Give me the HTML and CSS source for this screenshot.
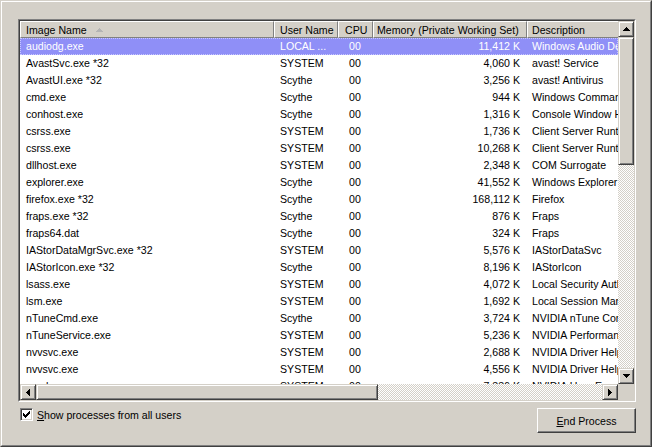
FILE: index.html
```html
<!DOCTYPE html>
<html>
<head>
<meta charset="utf-8">
<title>Processes</title>
<link rel="stylesheet" href="styles.css">
</head>
<body>
<div class="window">
  <div class="frame">
    <div class="listview">
      <div class="lv-inner">
        <div class="lv-main">
          <div class="lv-header">
            <div class="hcell c1">Image Name<svg class="sort" width="7" height="4" viewBox="0 0 7 4" shape-rendering="crispEdges"><path d="M3 0h1v1h-1z M2 1h3v1h-3z M1 2h5v1h-5z M0 3h7v1h-7z"/></svg></div>
            <div class="hcell c2">User Name</div>
            <div class="hcell c3">CPU</div>
            <div class="hcell c4">Memory (Private Working Set)</div>
            <div class="hcell c5">Description</div>
          </div>
          <div class="lv-rows">
            <div class="row selected"><span class="c1">audiodg.exe</span><span class="c2">LOCAL ...</span><span class="c3">00</span><span class="c4">11,412 K</span><span class="c5">Windows Audio Device Graph Isolation</span></div>
            <div class="row"><span class="c1">AvastSvc.exe *32</span><span class="c2">SYSTEM</span><span class="c3">00</span><span class="c4">4,060 K</span><span class="c5">avast! Service</span></div>
            <div class="row"><span class="c1">AvastUI.exe *32</span><span class="c2">Scythe</span><span class="c3">00</span><span class="c4">3,256 K</span><span class="c5">avast! Antivirus</span></div>
            <div class="row"><span class="c1">cmd.exe</span><span class="c2">Scythe</span><span class="c3">00</span><span class="c4">944 K</span><span class="c5">Windows Command Processor</span></div>
            <div class="row"><span class="c1">conhost.exe</span><span class="c2">Scythe</span><span class="c3">00</span><span class="c4">1,316 K</span><span class="c5">Console Window Host</span></div>
            <div class="row"><span class="c1">csrss.exe</span><span class="c2">SYSTEM</span><span class="c3">00</span><span class="c4">1,736 K</span><span class="c5">Client Server Runtime Process</span></div>
            <div class="row"><span class="c1">csrss.exe</span><span class="c2">SYSTEM</span><span class="c3">00</span><span class="c4">10,268 K</span><span class="c5">Client Server Runtime Process</span></div>
            <div class="row"><span class="c1">dllhost.exe</span><span class="c2">SYSTEM</span><span class="c3">00</span><span class="c4">2,348 K</span><span class="c5">COM Surrogate</span></div>
            <div class="row"><span class="c1">explorer.exe</span><span class="c2">Scythe</span><span class="c3">00</span><span class="c4">41,552 K</span><span class="c5">Windows Explorer</span></div>
            <div class="row"><span class="c1">firefox.exe *32</span><span class="c2">Scythe</span><span class="c3">00</span><span class="c4">168,112 K</span><span class="c5">Firefox</span></div>
            <div class="row"><span class="c1">fraps.exe *32</span><span class="c2">Scythe</span><span class="c3">00</span><span class="c4">876 K</span><span class="c5">Fraps</span></div>
            <div class="row"><span class="c1">fraps64.dat</span><span class="c2">Scythe</span><span class="c3">00</span><span class="c4">324 K</span><span class="c5">Fraps</span></div>
            <div class="row"><span class="c1">IAStorDataMgrSvc.exe *32</span><span class="c2">SYSTEM</span><span class="c3">00</span><span class="c4">5,576 K</span><span class="c5">IAStorDataSvc</span></div>
            <div class="row"><span class="c1">IAStorIcon.exe *32</span><span class="c2">Scythe</span><span class="c3">00</span><span class="c4">8,196 K</span><span class="c5">IAStorIcon</span></div>
            <div class="row"><span class="c1">lsass.exe</span><span class="c2">SYSTEM</span><span class="c3">00</span><span class="c4">4,072 K</span><span class="c5">Local Security Authority Process</span></div>
            <div class="row"><span class="c1">lsm.exe</span><span class="c2">SYSTEM</span><span class="c3">00</span><span class="c4">1,692 K</span><span class="c5">Local Session Manager Service</span></div>
            <div class="row"><span class="c1">nTuneCmd.exe</span><span class="c2">Scythe</span><span class="c3">00</span><span class="c4">3,724 K</span><span class="c5">NVIDIA nTune Command Server</span></div>
            <div class="row"><span class="c1">nTuneService.exe</span><span class="c2">SYSTEM</span><span class="c3">00</span><span class="c4">5,236 K</span><span class="c5">NVIDIA Performance Service</span></div>
            <div class="row"><span class="c1">nvvsvc.exe</span><span class="c2">SYSTEM</span><span class="c3">00</span><span class="c4">2,688 K</span><span class="c5">NVIDIA Driver Helper Service</span></div>
            <div class="row"><span class="c1">nvvsvc.exe</span><span class="c2">SYSTEM</span><span class="c3">00</span><span class="c4">4,556 K</span><span class="c5">NVIDIA Driver Helper Service</span></div>
            <div class="row"><span class="c1">nvxdsync.exe</span><span class="c2">SYSTEM</span><span class="c3">00</span><span class="c4">7,336 K</span><span class="c5">NVIDIA User Experience Driver</span></div>
          </div>
        </div>
        <div class="vscroll">
          <div class="sbtn"><svg width="7" height="4" viewBox="0 0 7 4" shape-rendering="crispEdges"><path d="M3 0h1v1h-1z M2 1h3v1h-3z M1 2h5v1h-5z M0 3h7v1h-7z"/></svg></div>
          <div class="vthumb"></div>
          <div class="vtrack"></div>
          <div class="sbtn"><svg width="7" height="4" viewBox="0 0 7 4" shape-rendering="crispEdges"><path d="M0 0h7v1h-7z M1 1h5v1h-5z M2 2h3v1h-3z M3 3h1v1h-1z"/></svg></div>
        </div>
        <div class="hscroll">
          <div class="sbtn"><svg width="4" height="7" viewBox="0 0 4 7" shape-rendering="crispEdges"><path d="M0 3h1v1h-1z M1 2h1v3h-1z M2 1h1v5h-1z M3 0h1v7h-1z"/></svg></div>
          <div class="hthumb"></div>
          <div class="htrack"></div>
          <div class="sbtn"><svg width="4" height="7" viewBox="0 0 4 7" shape-rendering="crispEdges"><path d="M0 0h1v7h-1z M1 1h1v5h-1z M2 2h1v3h-1z M3 3h1v1h-1z"/></svg></div>
        </div>
        <div class="corner"></div>
      </div>
    </div>
    <div class="footer">
      <label class="chk">
        <span class="box"><svg width="7" height="7" viewBox="0 0 7 7" shape-rendering="crispEdges"><path d="M6 0h1v1h-1z M5 1h2v1h-2z M0 2h1v1h-1z M4 2h3v1h-3z M0 3h2v1h-2z M3 3h3v1h-3z M0 4h5v1h-5z M1 5h3v1h-3z M2 6h1v1h-1z"/></svg></span>
        <span class="chk-label"><u>S</u>how processes from all users</span>
      </label>
      <button class="btn"><u>E</u>nd Process</button>
    </div>
  </div>
</div>
</body>
</html>
```
FILE: styles.css
```css
* { box-sizing: border-box; }
html, body { margin: 0; padding: 0; }
body {
  background: #d4d0c8;
  font-family: "Liberation Sans", Arial, sans-serif;
  font-size: 10.6px;
  color: #000;
}
.window {
  width: 652px;
  height: 447px;
  border: 1px solid;
  border-color: #d4d0c8 #404040 #404040 #d4d0c8;
}
.frame {
  height: 100%;
  border: 1px solid;
  border-color: #fff #808080 #808080 #fff;
  padding: 17px 14px 12px 16px;
  display: flex;
  flex-direction: column;
  gap: 6px;
}
.listview {
  width: 618px;
  height: 383px;
  flex: none;
  border: 1px solid;
  border-color: #808080 #fff #fff #808080;
}
.lv-inner {
  height: 100%;
  border: 1px solid;
  border-color: #404040 #d4d0c8 #d4d0c8 #404040;
  display: grid;
  grid-template-columns: 1fr 16px;
  grid-template-rows: 1fr 16px;
  background: #fff;
}
.lv-main { overflow: hidden; min-width: 0; min-height: 0; }
.lv-header {
  display: flex;
  height: 17px;
  background: #d4d0c8;
}
.hcell {
  flex: none;
  height: 17px;
  border-top: 1px solid #fff;
  border-left: 1px solid #fff;
  border-right: 1px solid #808080;
  border-bottom: 1px solid #808080;
  line-height: 14px;
  white-space: nowrap;
  overflow: hidden;
  display: flex;
  align-items: center;
}
.hcell.c1 { padding-left: 5px; }
.hcell.c2 { padding-left: 5px; }
.hcell.c3 { padding-left: 6px; }
.hcell.c4 { padding-left: 3px; }
.hcell.c5 { padding-left: 4px; }
.sort { margin-left: 9px; margin-top: 1px; fill: #b4b4b4; }
.c1 { width: 254px; }
.c2 { width: 64px; }
.c3 { width: 35px; }
.c4 { width: 154px; }
.c5 { width: 300px; }
.row {
  display: flex;
  height: 17px;
  line-height: 17px;
  white-space: nowrap;
  position: relative;
}
.row span { flex: none; overflow: hidden; }
.row .c1 { padding-left: 6px; }
.row .c2 { padding-left: 6px; }
.row .c3 { padding-left: 11px; }
.row .c4 { text-align: right; padding-right: 7px; }
.row .c5 { padding-left: 5px; }
.row.selected { background: #8f8ff7; color: #fff; }
.row.selected::after {
  content: "";
  position: absolute;
  inset: 0;
  border: 1px dotted #c8c8ff;
}
.sbtn {
  flex: none;
  width: 16px;
  height: 16px;
  background: #d4d0c8;
  border: 1px solid;
  border-color: #d4d0c8 #404040 #404040 #d4d0c8;
  box-shadow: inset 1px 1px #fff, inset -1px -1px #808080;
  display: flex;
  align-items: center;
  justify-content: center;
}
.sbtn svg { fill: #000; }
.vscroll {
  display: flex;
  flex-direction: column;
  background: repeating-conic-gradient(#d4d0c8 0 25%, #fff 0 50%) 0 0 / 2px 2px;
}
.vthumb, .hthumb {
  flex: none;
  background: #d4d0c8;
  border: 1px solid;
  border-color: #d4d0c8 #404040 #404040 #d4d0c8;
  box-shadow: inset 1px 1px #fff, inset -1px -1px #808080;
}
.vthumb { height: 128px; }
.vtrack, .htrack { flex: 1; }
.hscroll {
  display: flex;
  background: repeating-conic-gradient(#d4d0c8 0 25%, #fff 0 50%) 0 0 / 2px 2px;
}
.hthumb { width: 342px; }
.corner { background: #d4d0c8; }
.footer {
  display: flex;
  justify-content: space-between;
  align-items: flex-start;
  padding-left: 2px;
}
.chk {
  display: flex;
  align-items: flex-start;
  gap: 4px;
}
.box {
  width: 13px;
  height: 13px;
  background: #fff;
  border: 1px solid;
  border-color: #808080 #fff #fff #808080;
  box-shadow: inset 1px 1px #404040, inset -1px -1px #d4d0c8;
  display: flex;
  align-items: center;
  justify-content: center;
}
.chk-label { line-height: 13px; padding-top: 1px; }
.btn {
  width: 99px;
  height: 25px;
  margin: 0;
  padding: 0;
  font: inherit;
  color: #000;
  background: #d4d0c8;
  border: 1px solid;
  border-color: #fff #404040 #404040 #fff;
  box-shadow: inset -1px -1px #808080;
}
```
